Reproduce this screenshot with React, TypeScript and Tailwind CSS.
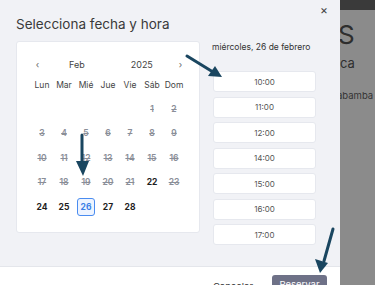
import React from 'react';

const font = { fontFamily: 'Inter, "Noto Sans", sans-serif' };

const weekDays = ['Lun', 'Mar', 'Mié', 'Jue', 'Vie', 'Sáb', 'Dom'];

// null = empty cell
const days: (number | null)[] = [
    null, null, null, null, null, 1, 2,
    3, 4, 5, 6, 7, 8, 9,
    10, 11, 12, 13, 14, 15, 16,
    17, 18, 19, 20, 21, 22, 23,
    24, 25, 26, 27, 28, null, null,
];

const available = [22, 24, 25, 26, 27, 28];
const selected = 26;

const slots = ['10:00', '11:00', '12:00', '14:00', '15:00', '16:00', '17:00'];

const DayCell: React.FC<{ day: number | null }> = ({ day }) => {
    if (day === null) return <div className="h-[24.5px]" />;
    if (day === selected) {
        return (
            <div className="h-[24.5px] flex items-center justify-center">
                <div className="w-[18px] h-[18px] flex items-center justify-center rounded-[3px] border-[1.5px] border-[#4a8cf0] bg-[#eef4ff] text-[8.5px] font-bold text-[#3b7fe6]">
                    {day}
                </div>
            </div>
        );
    }
    const isAvailable = available.includes(day);
    return (
        <div
            className={
                isAvailable
                    ? 'h-[24.5px] flex items-center justify-center text-[8.5px] font-bold text-[#1e1e1e]'
                    : 'h-[24.5px] flex items-center justify-center text-[8.5px] font-semibold text-[#8a8e98] line-through'
            }
        >
            {day}
        </div>
    );
};

const Arrows: React.FC = () => (
    <svg className="absolute inset-0 pointer-events-none" width="375" height="285" viewBox="0 0 375 285">
        <g stroke="#1a4660" strokeWidth="3" strokeLinecap="round" fill="#1a4660">
            <line x1="187" y1="56" x2="213" y2="72" />
            <polygon points="222,77 208,76 215,66" stroke="none" />
            <line x1="82" y1="135" x2="82" y2="163" />
            <polygon points="83,176 76,161 89,161" stroke="none" />
            <line x1="333" y1="229" x2="324" y2="261" />
            <polygon points="320,273 315,259 328,263" stroke="none" />
        </g>
    </svg>
);

export default function App() {
    return (
        <div className="relative w-[375px] h-[285px] overflow-hidden flex" style={font}>
            {/* modal */}
            <div className="w-[340px] h-full flex flex-col bg-[#f1f2f6]">
                <div className="relative shrink-0 px-4 pt-[15px] h-[41px]">
                    <h2 className="text-[13.5px] leading-[18px] text-[#3a3a3a]">Selecciona fecha y hora</h2>
                    <span className="absolute right-[12px] top-[1px] text-[12px] text-[#444]">×</span>
                </div>

                <div className="flex shrink-0 pl-4 h-[225px]">
                    {/* calendar */}
                    <div className="w-[184px] h-[192px] bg-white rounded-[3px] border border-[#e6e8ee] px-[14px] pt-[15px]">
                        <div className="h-4 flex items-center text-[9px] text-[#444]">
                            <span className="w-[13px] text-center text-[#666]">‹</span>
                            <span className="ml-[25px]">Feb</span>
                            <span className="ml-[46px]">2025</span>
                            <span className="ml-[26px] text-[#666]">›</span>
                        </div>
                        <div className="grid grid-cols-7">
                            {weekDays.map((d) => (
                                <div key={d} className="h-6 flex items-center justify-center text-[8.5px] text-[#444]">
                                    {d}
                                </div>
                            ))}
                        </div>
                        <div className="grid grid-cols-7">
                            {days.map((d, i) => (
                                <DayCell key={i} day={d} />
                            ))}
                        </div>
                    </div>

                    {/* time slots */}
                    <div className="ml-3 w-[104px] flex flex-col">
                        <p className="text-[8.5px] leading-[11px] text-[#333] mt-[1px]">miércoles, 26 de febrero</p>
                        <div className="mt-[18px] flex flex-col gap-[4.5px] pl-px">
                            {slots.map((s) => (
                                <div
                                    key={s}
                                    className="h-[21px] bg-white rounded-[3px] border border-[#e6e8ee] flex items-center justify-center text-[8px] text-[#555]"
                                >
                                    {s}
                                </div>
                            ))}
                        </div>
                    </div>
                </div>

                {/* footer */}
                <div className="flex-1 min-h-0 overflow-hidden bg-white border-t border-[#e4e6eb] flex items-start justify-end pr-[13px] pt-[8px]">
                    <span className="mt-[5px] text-[9.5px] text-[#333]">Cancelar</span>
                    <button className="ml-[19px] w-[55px] h-[16px] rounded-t-[3px] bg-[#6e7187] text-white text-[9.5px] pt-[3px] leading-none">
                        Reservar
                    </button>
                </div>
            </div>

            {/* page behind overlay */}
            <div className="flex-1 h-full bg-[#8b8b8b] flex flex-col overflow-hidden">
                <div className="h-[10px] bg-[#3a3a3a]" />
                <div className="-ml-[2px] mt-[12px] text-[26px] leading-[26px] text-[#2e2e2e] whitespace-nowrap">S</div>
                <div className="ml-0 mt-[8px] text-[13px] leading-[14px] text-[#2e2e2e] whitespace-nowrap">ca</div>
                <div className="-ml-[3px] mt-[19px] text-[9.5px] text-[#333] whitespace-nowrap">abamba</div>
            </div>

            <Arrows />
        </div>
    );
}
